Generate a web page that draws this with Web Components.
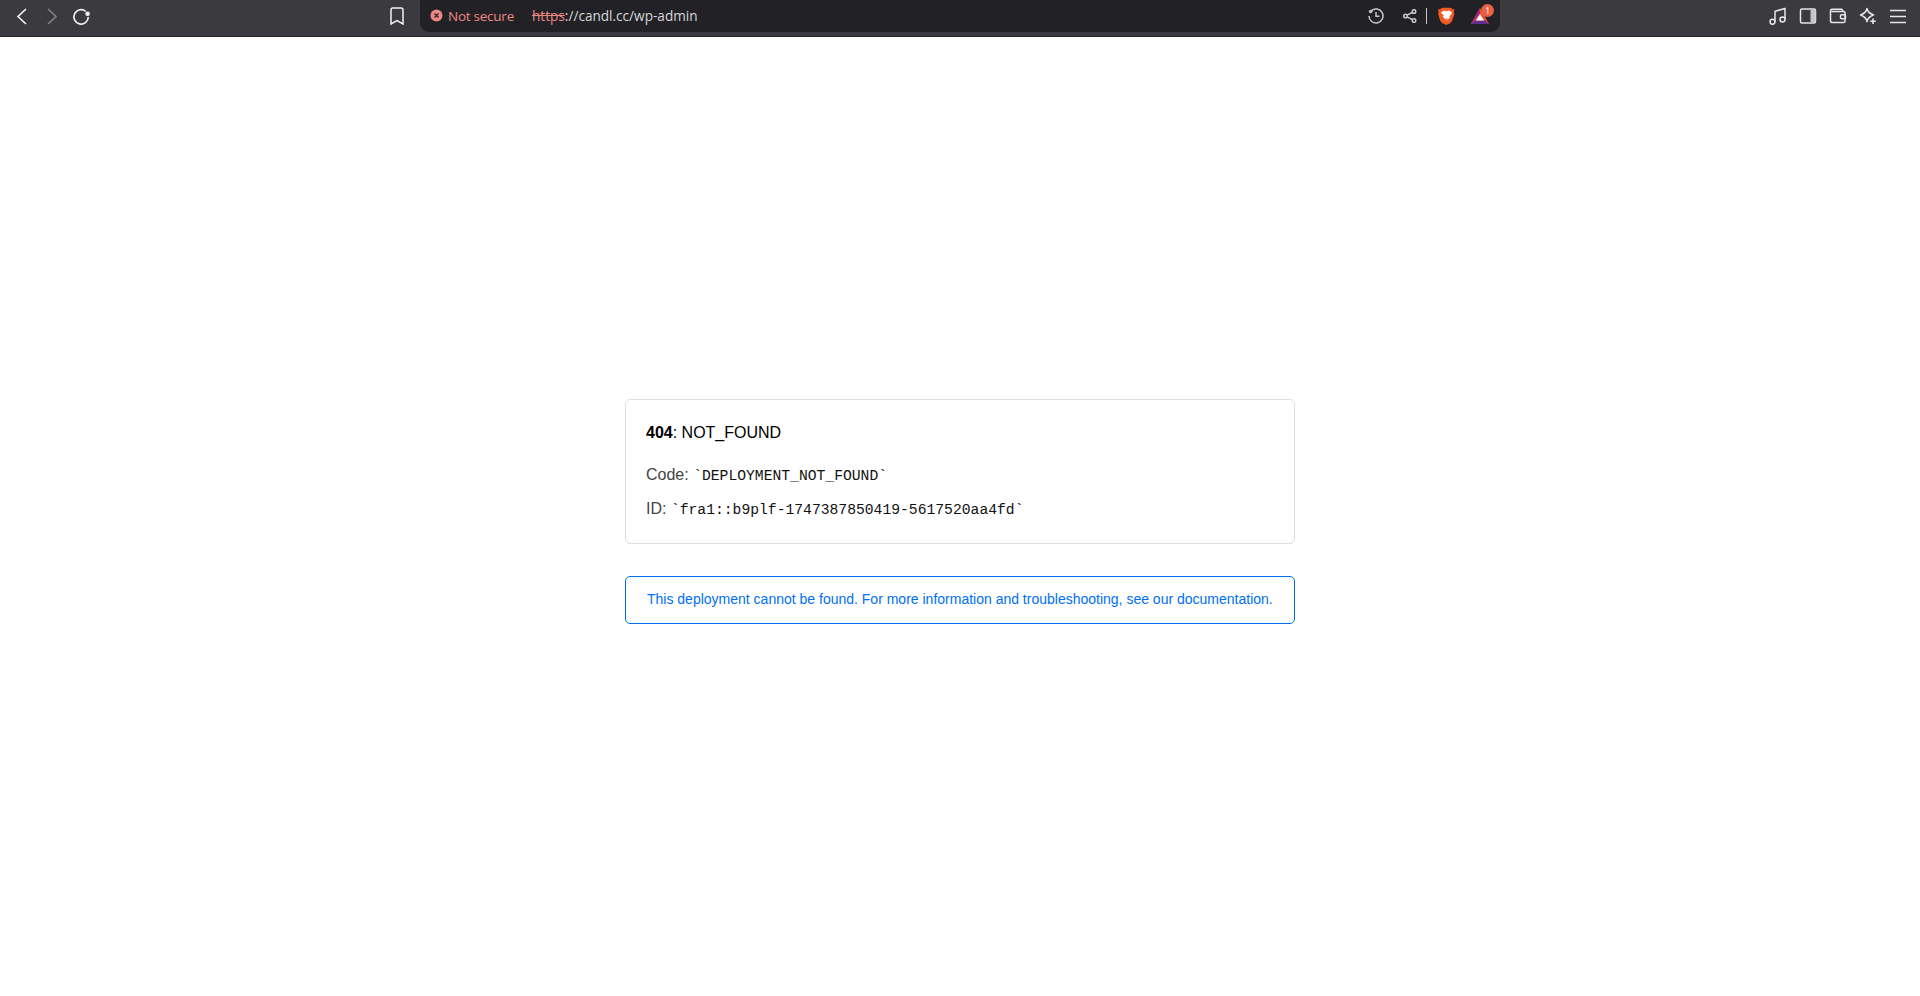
<!DOCTYPE html>
<html lang="en">
<head>
<meta charset="utf-8">
<title>404: NOT_FOUND</title>
<style>
    html, body { margin: 0; padding: 0; height: 100%; background: #fff; }
    body { display: flex; flex-direction: column; overflow: hidden; }
</style>
</head>
<body>
<browser-toolbar url-host="//candl.cc/wp-admin"></browser-toolbar>
<error-page>
    <error-card slot="card" code="DEPLOYMENT_NOT_FOUND" error-id="fra1::b9plf-1747387850419-5617520aa4fd"></error-card>
    <info-alert slot="alert">This deployment cannot be found. For more information and troubleshooting, see our documentation.</info-alert>
</error-page>

<script>
class BrowserToolbar extends HTMLElement {
    constructor() {
        super();
        const shadow = this.attachShadow({ mode: 'open' });
        shadow.innerHTML = `
            <style>
                :host {
                    display: flex;
                    flex: none;
                    height: 36px;
                    background: #3b3a3f;
                    border-bottom: 1px solid #202024;
                    font-family: "Open Sans", "Noto Sans", sans-serif;
                    font-size: 13.5px;
                    color: #d6d6d8;
                }
                svg { display: block; flex: none; fill: none; stroke: currentColor; stroke-width: 1.5; }
                .left { width: 420px; flex: none; display: flex; align-items: flex-start; padding: 7px 0 0 16px; box-sizing: border-box; color: #f2f2f2; }
                .left .fwd { margin-left: 18px; color: #808083; }
                .left .reload { margin-left: 14px; }
                .left .mark { margin-left: auto; margin-right: 16px; }
                .url {
                    width: 1080px;
                    flex: none;
                    height: 32px;
                    box-sizing: border-box;
                    background: #222226;
                    border-radius: 0 0 9px 9px;
                    display: flex;
                    align-items: center;
                    padding: 0 11px 1px 10px;
                }
                .secure { color: #ec8784; margin-left: 5px; width: 84px; flex: none; white-space: nowrap; letter-spacing: -0.25px; }
                .host { white-space: nowrap; font-size: 13.6px; }
                .host s { color: #ec8784; }
                .url-icons { margin-left: auto; display: flex; align-items: center; color: #c8c8ca; }
                .sep { width: 1px; height: 16px; background: #c8c8ca; margin: 0 11px 0 9px; }
                .rewards { position: relative; margin-left: 16px; width: 18px; height: 16px; }
                .badge {
                    position: absolute;
                    top: -4px;
                    right: -5px;
                    width: 13px;
                    height: 13px;
                    border-radius: 50%;
                    background: #ed5f45;
                    color: #fff;
                    font: 9px/13px "Open Sans", sans-serif;
                    text-align: center;
                }
                .right { flex: 1; display: flex; justify-content: flex-end; align-items: flex-start; gap: 12px; padding: 7px 13px 0 0; color: #e6e6e8; }
            </style>
            <div class="left">
                <svg width="12" height="18" viewBox="0 0 12 18"><path d="M10 2 2 9.500l8 7.500" stroke-width="1.700"/></svg>
                <svg class="fwd" width="12" height="18" viewBox="0 0 12 18"><path d="M2 2l8 7.500L2 17" stroke-width="1.700"/></svg>
                <svg class="reload" width="20" height="20" viewBox="0 0 20 20"><path d="M16.300 10a7.200 7.200 0 1 1-2.600-5.700" stroke-width="1.700"/><circle cx="15.600" cy="6.700" r="2.300" fill="currentColor" stroke="none"/></svg>
                <svg class="mark" width="14" height="18" viewBox="0 0 14 18"><path d="M1 2.800Q1 1 2.800 1h8.400Q13 1 13 2.800V17L7 13.600 1 17Z"/></svg>
            </div>
            <div class="url">
                <svg width="13" height="13" viewBox="0 0 13 13" style="stroke:none"><circle cx="6.500" cy="6.500" r="6" fill="#ec8784"/><path d="M4.500 4.500l4 4m0-4-4 4" stroke="#3a2628" stroke-width="1.500"/></svg>
                <span class="secure">Not secure</span>
                <span class="host"><s>https</s>:<span id="host"></span></span>
                <div class="url-icons">
                    <svg width="16" height="16" viewBox="0 0 16 16" stroke-width="1.300"><path d="M3.300 2.800A7 7 0 1 1 1 8"/><path d="M8 4v4.300h3.500"/><circle cx="2.700" cy="3.500" r="1.800" fill="currentColor" stroke="none"/></svg>
                    <svg style="margin-left:19px" width="14" height="14" viewBox="0 0 14 14" stroke-width="1.200"><circle cx="11" cy="2.500" r="1.800"/><circle cx="2.500" cy="7" r="1.800"/><circle cx="11" cy="11.500" r="1.800"/><path d="M4.100 6.200 9.400 3.300M4.100 7.800l5.300 2.900"/></svg>
                    <span class="sep"></span>
                    <svg width="17" height="18" viewBox="0 0 16 19" preserveAspectRatio="none" style="stroke:none"><path d="M3.800.8h8.400l1.300 1.500 2 .2-.6 3.200.5 1.600-2.100 7.300q-.5 1.500-2 2.500L8 19l-3.800-1.900q-1.500-1-2-2.500L.1 7.300.6 5.700 0 2.500l2-.2Z" fill="#f15a22"/><path d="M2.800 5.800 5.800 3.800l2.200.6 2.200-.6 3 2-1 2.700-1.700 1.100.9 1.600L8 14.500l-3.400-4.300.9-1.600-1.700-1.100Z" fill="#fff"/><path d="M6.600 12.600 8 11.800l1.400.8L8 14Z" fill="#f15a22"/></svg>
                    <div class="rewards">
                        <svg width="18" height="16" viewBox="0 0 18 16" style="stroke:none"><path d="M9 0 0 16h18Z" fill="#f0522b"/><path d="M0 16h18l-3.500-3.500h-11Z" fill="#662d91"/><path d="M0 16 9 0v6L3.500 12.500Z" fill="#a3278f"/><path d="M9 6l-4 6.500h8Z" fill="#fff"/></svg>
                        <span class="badge">1</span>
                    </div>
                </div>
            </div>
            <div class="right">
                <svg width="18" height="18" viewBox="0 0 18 18" stroke-width="1.300"><path d="M6 14.500V4.200L16 1.500V12"/><circle cx="3.500" cy="14.800" r="2.500"/><circle cx="13.500" cy="12.500" r="2.500"/></svg>
                <svg width="18" height="18" viewBox="0 0 18 18" stroke-width="1.300"><rect x="1.500" y="2" width="15" height="14" rx="1.500"/><path d="M11.500 2h4a1 1 0 0 1 1 1v12a1 1 0 0 1-1 1h-4Z" fill="#c4c4c6" stroke="none"/></svg>
                <svg width="18" height="18" viewBox="0 0 18 18" stroke-width="1.300"><path d="M13.500 4.500V3.300q0-1-1-1H3q-1.500 0-1.500 1.500v9.900q0 1.800 1.800 1.800h11.400q1.300 0 1.300-1.300V5.700q0-1.200-1.300-1.200H2.500"/><rect x="11.500" y="7.800" width="5" height="4" rx="1"/></svg>
                <svg width="18" height="18" viewBox="0 0 18 18" stroke-width="1.300"><path d="M8 1.500q.9 4.500 6.500 6.500-5.600 2-6.500 6.500Q7.100 10 1.500 8 7.100 6 8 1.500Z" stroke-linejoin="round"/><path d="M14 11.500v5.500M11.200 14.200h5.600" stroke-width="1.600"/></svg>
                <svg width="18" height="18" viewBox="0 0 18 18" stroke-width="1.500"><path d="M1 3.500h16M1 9.500h16M1 15.500h16"/></svg>
            </div>
        `;
        shadow.getElementById('host').textContent = this.getAttribute('url-host');
    }
}

class ErrorPage extends HTMLElement {
    constructor() {
        super();
        const shadow = this.attachShadow({ mode: 'open' });
        shadow.innerHTML = `
            <style>
                :host {
                    display: flex;
                    flex-direction: column;
                    align-items: center;
                    flex: 1;
                    padding-top: 362px;
                    gap: 32px;
                    background: #fff;
                }
            </style>
            <slot name="card"></slot>
            <slot name="alert"></slot>
        `;
    }
}

class ErrorCard extends HTMLElement {
    constructor() {
        super();
        const shadow = this.attachShadow({ mode: 'open' });
        shadow.innerHTML = `
            <style>
                :host {
                    display: block;
                    width: 670px;
                    height: 145px;
                    box-sizing: border-box;
                    padding: 21px 20px 0;
                    border: 1px solid #dedede;
                    border-radius: 5px;
                    font-family: "Liberation Sans", Arial, sans-serif;
                    font-size: 16px;
                    color: #444;
                }
                h1 { margin: 0 0 18px; font-size: 16px; line-height: 24px; font-weight: 400; color: #000; }
                p { margin: 0; line-height: 24px; height: 34px; }
                code { font-family: "Liberation Mono", monospace; font-size: 14.7px; color: #111; }
            </style>
            <h1><b>404</b>: NOT_FOUND</h1>
            <p>Code: <code id="code"></code></p>
            <p>ID: <code id="id"></code></p>
        `;
        shadow.getElementById('code').textContent = '`' + this.getAttribute('code') + '`';
        shadow.getElementById('id').textContent = '`' + this.getAttribute('error-id') + '`';
    }
}

class InfoAlert extends HTMLElement {
    constructor() {
        super();
        const shadow = this.attachShadow({ mode: 'open' });
        shadow.innerHTML = `
            <style>
                :host {
                    display: block;
                    width: 670px;
                    height: 48px;
                    box-sizing: border-box;
                    border: 1px solid #0070f3;
                    border-radius: 5px;
                    padding: 0 21px;
                    font-family: "Liberation Sans", Arial, sans-serif;
                    font-size: 14px;
                    line-height: 45px;
                    color: #0070f3;
                    white-space: nowrap;
                }
            </style>
            <slot></slot>
        `;
    }
}

customElements.define('browser-toolbar', BrowserToolbar);
customElements.define('error-page', ErrorPage);
customElements.define('error-card', ErrorCard);
customElements.define('info-alert', InfoAlert);
</script>
</body>
</html>
